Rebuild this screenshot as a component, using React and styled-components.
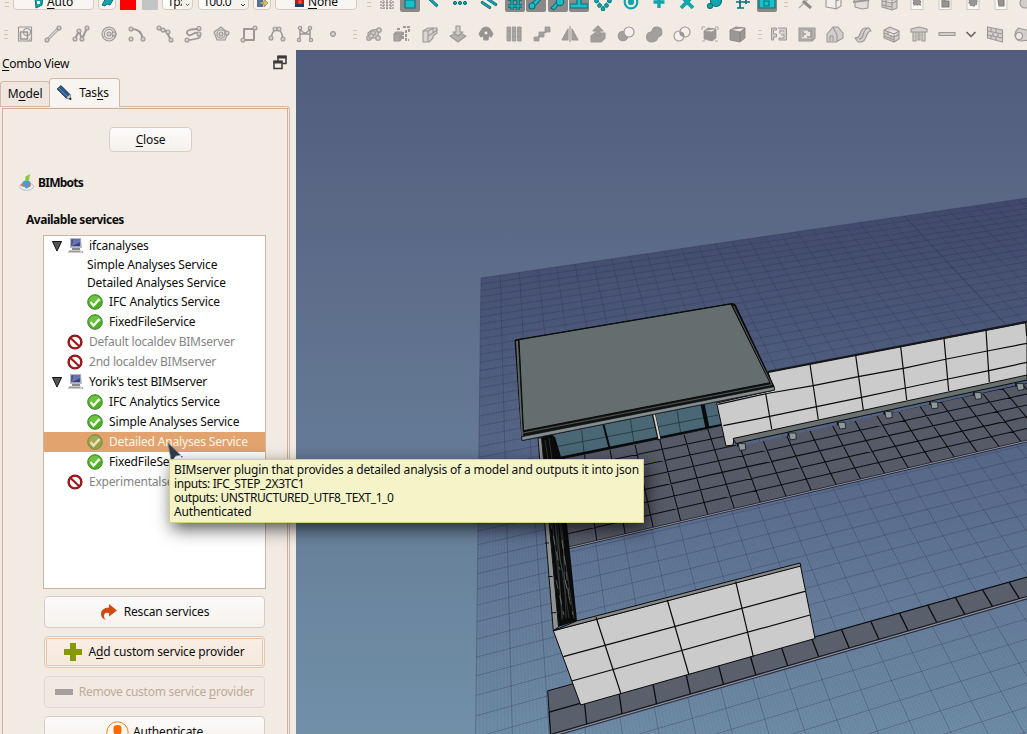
import React from "react";
import styled, { createGlobalStyle, css } from "styled-components";

const Global = createGlobalStyle`
  * { box-sizing: border-box; }
  html, body { margin: 0; padding: 0; overflow: hidden; }
  body {
    font-family: "Noto Sans", "Open Sans", sans-serif;
    font-size: 12px;
    letter-spacing: -0.15px;
    color: #0c0c0c;
    background: #f2ebe4;
  }
  u { text-decoration-thickness: 1px; text-underline-offset: 2px; text-decoration-skip-ink: none; }
`;

const Window = styled.div`
  position: relative;
  width: 1027px;
  height: 734px;
  overflow: hidden;
  display: flex;
  flex-direction: column;
  background: #f2ebe4;
`;
const ToolArea = styled.header`
  height: 50px;
  flex: none;
  overflow: hidden;
  display: flex;
  flex-direction: column;
  justify-content: flex-end;
`;
const ToolRow = styled.div`
  height: 32px;
  flex: none;
  display: flex;
  align-items: center;
`;
const Slot = styled.div`
  width: ${(p) => p.$w || 28}px;
  height: 32px;
  flex: none;
  display: flex;
  align-items: center;
  justify-content: center;
`;
const Pressed = styled(Slot)`
  width: 20px;
  height: 19px;
  margin: 0 ${(p) => p.$r ?? 1}px 0 ${(p) => p.$l || 0}px;
  border-radius: 2px;
  background: #8b8888;
`;
const GripBox = styled.div`
  width: ${(p) => p.$w}px;
  flex: none;
  display: flex;
  flex-direction: column;
  align-items: center;
  gap: 3px;
  padding-left: ${(p) => p.$pad || 0}px;
  i { width: 4px; height: 1px; background: #d5c2b2; }
`;
const BarButton = styled.div`
  width: ${(p) => p.$w}px;
  height: 17px;
  margin-right: 4px;
  flex: none;
  display: flex;
  align-items: center;
  justify-content: center;
  gap: 3px;
  margin-top: -1px;
  line-height: 15px;
  border: 1px solid #d9cabd;
  border-radius: 4px;
  background: #f8f5f2;
`;
const Field = styled(BarButton)`
  justify-content: space-between;
  margin-right: ${(p) => p.$mr}px;
  padding: 0 2px 0 4px;
  background: linear-gradient(90deg, #fff 65%, #f6f2ee 65%);
  span { width: 17px; overflow: hidden; white-space: nowrap; letter-spacing: -0.5px; }
  span.wide { width: 32px; }
`;
const Swatch = styled.div`
  width: 16px;
  height: 16px;
  flex: none;
  margin-right: ${(p) => p.$mr}px;
  background: ${(p) => p.$c};
`;

const Body = styled.div`
  flex: 1;
  min-height: 0;
  display: flex;
`;
const Side = styled.aside`
  width: 296px;
  flex: none;
  display: flex;
  flex-direction: column;
`;
const SideTitle = styled.div`
  height: 28px;
  display: flex;
  align-items: center;
  justify-content: space-between;
  padding: 0 9px 2px 2px;
  span { letter-spacing: -0.3px; }
  svg { margin-top: -2px; }
`;
const Tabs = styled.div`
  height: 28px;
  display: flex;
  align-items: flex-end;
`;
const Tab = styled.div`
  width: ${(p) => p.$w}px;
  height: ${(p) => (p.$active ? 29 : 25)}px;
  display: flex;
  align-items: center;
  justify-content: center;
  gap: 7px;
  padding-bottom: 1px;
  border: 1px solid #d3b9a6;
  border-bottom: 0;
  border-radius: 4px 4px 0 0;
  background: ${(p) => (p.$active ? "#f8f4f0" : "#efe7df")};
  ${(p) => p.$active && css`margin-left: -1px; margin-bottom: -1px; padding-right: 4px; z-index: 1;`}
`;
const PaneOuter = styled.div`
  flex: 1;
  min-height: 0;
  width: 290px;
  padding: 1px 1px 0 2px;
  border: 1px solid #d3b9a6;
  border-width: 1px 1px 0 0;
  border-radius: 0 4px 0 0;
`;
const Pane = styled.div`
  height: 640px;
  border: 1px solid #cfae98;
  border-bottom: 0;
  padding: 18px 21px 0 40px;
  display: flex;
  flex-direction: column;
`;
const Button = styled.div`
  height: 32px;
  flex: none;
  margin: 0 1px 8px;
  display: flex;
  align-items: center;
  justify-content: center;
  gap: ${(p) => p.$gap || 7}px;
  border: 1px solid #d9cdc2;
  border-radius: 4px;
  background: linear-gradient(#fcfbfa, #f5f1ed);
  white-space: nowrap;
  span { margin-top: -1px; }
  ${(p) => p.$hot && css`
    background: linear-gradient(#f9ede5, #f5e8dc);
    box-shadow: inset 0 0 0 1px #f8f0e8, inset 0 0 0 2px #f0c4a0;
  `}
  ${(p) => p.$off && css`
    background: #f1e9e2;
    border-color: #e3d8cd;
    color: #bdab98;
    letter-spacing: -0.25px;
  `}
`;
const CloseButton = styled(Button)`
  width: 83px;
  height: 25px;
  margin: 0 0 0 66px;
  span { margin-top: 0; }
`;
const Heading = styled.div`
  display: flex;
  align-items: center;
  gap: 4px;
  height: 20px;
  margin: ${(p) => p.$m};
  font-weight: 700;
  letter-spacing: ${(p) => p.$ls || -0.75}px;
`;
const Tree = styled.div`
  height: 354px;
  flex: none;
  margin: 7px 0 7px;
  border: 1px solid #ccb5a3;
  background: #fff;
`;
const Row = styled.div`
  height: ${(p) => p.$h || 20}px;
  display: flex;
  align-items: center;
  padding-left: ${(p) => p.$pad}px;
  white-space: nowrap;
  color: ${(p) => (p.$sel ? "#fff5ea" : p.$off ? "#858585" : "#0c0c0c")};
  background: ${(p) => (p.$sel ? "#e2a36e" : "transparent")};
  ${(p) => p.$off && css`letter-spacing: -0.22px;`}
  svg { flex: none; margin-right: 6px; }
  svg + svg { margin-right: 5px; }
  span { margin-top: -1px; }
`;
const View = styled.main`
  flex: 1;
  min-width: 0;
  svg { display: block; }
`;
const Tooltip = styled.div`
  position: absolute;
  left: 169px;
  top: 459px;
  width: 475px;
  height: 64px;
  padding: 3px 4px;
  line-height: 14px;
  white-space: nowrap;
  border: 1px solid #d3d37c;
  background: #f5f4c9;
  box-shadow: 3px 6px 16px rgba(0, 0, 0, 0.65);
`;
const TipLine = styled.div`
  letter-spacing: ${(p) => p.$ls || -0.15}px;
`;
const Cursor = styled.svg`
  position: absolute;
  left: 166px;
  top: 441px;
`;

/* ---------- toolbar glyphs ---------- */
const G = ({ children, s = 18, c = "#9b9896", f = "#d3cecb", w = 1.1 }) => (
  <svg width={s} height={s} viewBox="0 0 18 18" fill={f} stroke={c} strokeWidth={w} strokeLinejoin="round">
    {children}
  </svg>
);
const dots = (pts, r = 2) => pts.map(([x, y], i) => <circle key={i} cx={x} cy={y} r={r} />);
const Grip = (p) => (
  <GripBox {...p}><i /><i /><i /></GripBox>
);

const draftIcons = [
  <G><path d="M2.500 2h13v11l-3 3h-10z" fill="#efeae6" /><path d="M4.500 7h7v7h-7z" fill="none" strokeWidth="1.600" /><circle cx="11" cy="7" r="3.500" fill="none" /><path d="M15.500 12v4h-3" /></G>,
  <G><path d="M3 15L15 3" strokeWidth="3" /><path d="M3 15L15 3" stroke="#ddd" />{dots([[3, 15], [15, 3]])}</G>,
  <G><path d="M3 14L7 6l3 8 5-11" fill="none" strokeWidth="2" />{dots([[3, 14], [7, 6], [10, 14], [15, 3]])}</G>,
  <G><circle cx="9" cy="9" r="7" fill="#ddd8d4" /><circle cx="9" cy="9" r="4.500" fill="#efeae6" />{dots([[9, 9], [14, 9]])}</G>,
  <G><path d="M4 4q9 0 11 10" fill="none" strokeWidth="2" />{dots([[3, 4], [3, 14], [15, 14]])}</G>,
  <G><path d="M3 3l7 3 5 9" fill="none" strokeWidth="2" />{dots([[3, 3], [7, 5], [12, 7], [15, 15]])}</G>,
  <G><path d="M15 4Q2 4 3 8t6 1 7 1-12 5" fill="none" strokeWidth="1.800" />{dots([[15, 3.500], [3, 15], [15, 9]])}</G>,
  <G><path d="M9 2l7 6-3 7H5L2 7z" fill="#ddd8d4" /><circle cx="9" cy="9" r="4" fill="#efeae6" />{dots([[9, 9], [15, 8]])}</G>,
  <G><path d="M4 4h10v11H4z" fill="none" strokeWidth="2" />{dots([[15, 3], [3, 15]])}</G>,
  <G><path d="M3 13q2-9 6-9t6 9" fill="none" strokeWidth="1.600" />{dots([[3, 13], [7, 4], [11, 4], [15, 14]])}</G>,
  <G><path d="M4 15V3q5 10 10 0v12M4 9h10" fill="none" strokeWidth="1.500" />{dots([[3, 15], [15, 15], [4, 3], [14, 3]], 1.7)}</G>,
  <G>{dots([[9, 9]], 2.4)}</G>,
];
const modIcons = [
  <G><path d="M3 8l4-3 8-1-3 9H3z" />{dots([[4, 13], [8, 8], [14, 5], [13, 13], [6, 11]], 2.3)}</G>,
  <G f="#aaa6a3"><path d="M1 9l2-2h6v6l-2 3H1zM1 9h6v7" /><path d="M4 4h4M10 2h6v4h-3v9h3M10 7v8" strokeWidth="2" strokeDasharray="3 1" fill="none" /></G>,
  <G><path d="M2 6l5-3h9v5l-4 3v2l-4 4H2z" fill="#d9d4d0" /><path d="M2 6h5v11M7 6l5-3M12 3v5l4-3M7 11l5-3" fill="none" /></G>,
  <G><path d="M1 11l8-4 8 4-8 6z" fill="#b5b1ae" /><path d="M7 1h4v6h3l-5 4-5-4h3z" /></G>,
  <G f="#96928f"><path d="M5 4q4-4 8 0l3 5-2 3-2-2-1 5H7l-1-5-2 2-2-3z" /><circle cx="9" cy="8" r="2" fill="#eee" /></G>,
  <G f="#a8a4a1" w={.9}><path d="M2 2h3.500v14H2zM7.300 2h3.500v14H7.300zM12.600 2h3.500v14h-3.500z" /><path d="M2 6.500h3.500M7.300 6.500h3.500M12.600 6.500h3.500M2 11.500h3.500M7.300 11.500h3.500M12.600 11.500h3.500" /></G>,
  <G f="#a39f9c" w={.8}><path d="M1 12h5v4H1zM6 7h5v5H6zM12 2h5v5h-5z" /><path d="M5 12l2-1M11 8l3-2" strokeWidth="2" /></G>,
  <G f="#a39f9c"><path d="M7 4v11H1zM11 4v11h6z" /><path d="M9 1v16" /></G>,
  <G f="#a39f9c"><path d="M2 11l4-3h10v5l-4 4H2z" /><path d="M9 1l5 5h-3v5H7V6H4z" /></G>,
  <G><circle cx="6" cy="11" r="4.800" fill="#a39f9c" /><circle cx="12" cy="7" r="5" fill="#f5f0eb" /></G>,
  <G f="#a39f9c"><path d="M7 6a5 5 0 1 1 6 6q-1 5-6 5a5 5 0 1 1-1-10z" /></G>,
  <G><circle cx="6" cy="11" r="5" fill="#f5f0eb" /><circle cx="12" cy="7" r="5" fill="#f5f0eb" /><path d="M7 7q4 0 4 4-4 0-4-4" fill="#999" /></G>,
  <G f="#9b9794" w={.8}><path d="M3 6l4-3 8 1v9l-4 3-8-2zM3 6l8 1 4-3M11 7v9" /><path d="M1 2h3M1 2v3M17 2h-3M17 2v3M1 16h3M17 16h-3" /></G>,
  <G f="#9b9794" w={.8} c="#868280"><path d="M1 5l6-3 9 1v10l-5 4-10-2zM1 5l10 2 5-4M11 7v10" /></G>,
];
const archIcons = [
  <G><path d="M1.500 3h5v2h-3v4h3v3h-3v3h-2zM8 3h8.500v12H9v-2h5v-3h-3M14 6h-4v3" strokeWidth="1" /></G>,
  <G><path d="M1 3h16v10l-3 3H1z" fill="#bbb7b4" /><path d="M3 5h11v9H3z" fill="#e9e4e0" /><path d="M5 6v6M5 9h3M10 6h3v6h-4" fill="none" strokeWidth="1.500" /></G>,
  <G><path d="M1 9l6-7 5 0 5 6v5l-7 4H1zM7 2l4 8v7M4 16v-5h3v5" /></G>,
  <G><path d="M1 13q4 0 5-4 2-6 5-6h4l2 3q-3 0-5 6-2 5-5 5H4zM15 3q-4 0-6 7-1 4-4 4" /></G>,
  <G><path d="M2 5l6-3 9 4v8l-5 3-10-4zM2 8l10 4 5-3M2 5l10 4 5-3M12 9v8M2 11l10 4M6 6v3M9 11v3" /></G>,
  <G><path d="M1 4l8-2 8 2v3H1zM3 7h3v9H3zM8 7h2v8H8zM12 7h3v9h-3z" /></G>,
  <G><path d="M1 7.500h16v3H1z" /></G>,
];
const teal = "#12a3ad";
const tealIcons = {
  tick: <G c="#06717a" f={teal} w={.9}><path d="M5 4l9 8-1.500 2L4 6z" /></G>,
  dots3: <G c="#06717a" f={teal} w={1}>{dots([[4, 10], [9, 10], [14, 10]], 1.6)}</G>,
  par: <G c="#06717a" f={teal} w={.9}><path d="M2 8l9 6-1 2-9-6zM8 5l9 6-1 2-9-6z" /></G>,
  grid: <G c="#0b6a72" w={3.4}><path d="M6 2v15M12 2v15M2 6h14M2 13h14" /><path d="M6 2v15M12 2v15M2 6h14M2 13h14" stroke="#18b3bd" strokeWidth="1.500" /></G>,
  end: <G c="#06717a" f="#18c0c9"><path d="M4 11l10-9 2 2-9 10z" />{dots([[5, 13]], 3)}</G>,
  mid: <G c="#06717a" f="#18c0c9"><path d="M2 15l12-13 2 2L5 17z" />{dots([[11, 9]], 3.6)}</G>,
  perp: <G c="#06717a" f="#18c0c9"><path d="M7 2h4v9h7v4H0v-4h7z" /></G>,
  ang: <G c="#06717a" f={teal} w={.9}><path d="M4 8l5 6 5-6" fill="none" stroke={teal} />{dots([[2.500, 8], [5.500, 12.500], [9, 16], [12.500, 12.500], [15.500, 8]], 1.9)}</G>,
  center: <G c={teal} w={2.200}><circle cx="9" cy="9" r="6.300" fill="none" /><circle cx="9" cy="9" r="2" fill={teal} /></G>,
  ortho: <G c={teal} w={3.400}><path d="M9 3v12M3.500 9h11" /></G>,
  inter: <G c={teal} w={3.800}><path d="M3 3l12 12M15 3L3 15" /></G>,
  near: <G c="#06717a" f={teal}>{dots([[10, 8]], 5.500)}{dots([[4, 13]], 2.500)}</G>,
  dim: <G c="#06717a" f={teal} w={1.700}><path d="M2 9h14M3 15h7M6 5v10M12 4v7" /></G>,
};
const whiteIcons = [
  <G c="#b5b1ad"><path d="M3 15L15 3" strokeWidth="1.500" /><path d="M7 8l8 7" stroke="#8d8a88" strokeWidth="3" /></G>,
  <G><path d="M2 6l6-4 4 3v11l-4-1-6-1zM12 8l5-2v7l-5 3" fill="#f2eeea" /></G>,
  <G><path d="M2 7l8-3 7 2-1 4v5l-6 1-7-2V9z" fill="#e2ddd9" /><path d="M1 9l16-2" strokeWidth="2" /></G>,
  <G><path d="M2 4l6-2 9 2v11l-5 2-10-3zM2 8l10 2 5-2M6 3v12M12 5v11M2 12l10 2" /></G>,
  ...[0, 1, 2, 3].map((n) => (
    <G key={n} f="#fbf9f7" c="#d0cac5"><path d="M3 1h12v15.500H3z" /><path d={["M5.500 6h7v6h-7z", "M6 4h3v4h4v6H6z", "M9 5a4 4 0 1 0 .1 0z", "M6 6l6-1v8H7z"][n]} fill="#99958f" stroke="#807c78" strokeDasharray={n % 2 ? "" : "2 1"} /></G>
  )),
];

/* ---------- panel icons ---------- */
const Ok = ({ dim }) => (
  <svg width="16" height="16" viewBox="0 0 16 16">
    <circle cx="8" cy="8" r="7.300" fill={dim ? "#92a13c" : "#4cb31c"} stroke={dim ? "#7b8a48" : "#4a7d3a"} strokeWidth="1" />
    <path d="M1.800 8a6.200 6.200 0 0 1 12.400 0" fill={dim ? "#a3aa55" : "#6cc33f"} />
    <path d="M3.500 8l3 3.500 6-6.500" fill="none" stroke={dim ? "#f0dfc4" : "#f4f8ef"} strokeWidth="2.500" />
  </svg>
);
const No = () => (
  <svg width="16" height="16" viewBox="0 0 16 16" fill="none">
    <circle cx="8" cy="8" r="6.400" stroke="#7c1013" strokeWidth="2.400" />
    <path d="M3.500 4l9 8.500" stroke="#a3171b" strokeWidth="2.200" />
    <circle cx="8" cy="8" r="6.300" stroke="#b81f23" strokeWidth="1" />
  </svg>
);
const Computer = () => (
  <svg width="16" height="16" viewBox="0 0 16 16">
    <path d="M2 0h11l1 10H2z" fill="#b9bbc4" />
    <path d="M3.200 1.200h9v7h-9z" fill="#3c4380" />
    <path d="M5 1.200h7v3L4 8z" fill="#6a74ad" />
    <path d="M4 10h8v2H4z" fill="#85868c" />
    <path d="M1 12h12l1 3H0z" fill="#c9c9c9" />
    <path d="M1 13.500h11M14 13l1 2" stroke="#999" />
  </svg>
);
const Arrow = () => (
  <svg width="10" height="11" viewBox="0 0 10 11"><path d="M.500 .500h9L5 10z" fill="#555" stroke="#111" /></svg>
);

const rows = [
  { t: "ifcanalyses", k: "root" },
  { t: "Simple Analyses Service", k: "plain", h: 18 },
  { t: "Detailed Analyses Service", k: "plain", h: 18 },
  { t: "IFC Analytics Service", k: "ok" },
  { t: "FixedFileService", k: "ok" },
  { t: "Default localdev BIMserver", k: "no" },
  { t: "2nd localdev BIMserver", k: "no" },
  { t: "Yorik's test BIMserver", k: "root" },
  { t: "IFC Analytics Service", k: "ok" },
  { t: "Simple Analyses Service", k: "ok" },
  { t: "Detailed Analyses Service", k: "ok", sel: true },
  { t: "FixedFileService", k: "ok" },
  { t: "Experimentalserver", k: "no" },
];
const padOf = { root: 8, plain: 43, ok: 43, no: 23 };

/* ---------- 3D view ---------- */
const project = (i, j) => {
  const u = 0.00583 * i;
  const s = -0.01187 * j;
  const w = 1 + u + s;
  return [(481 + 3808 * u + 487 * s) / w, (278 - 209 * u - 230 * s) / w];
};
const seg = (a, b) => `M${a[0].toFixed(1)} ${a[1].toFixed(1)}L${b[0].toFixed(1)} ${b[1].toFixed(1)}`;
const lines = (i0, i1, di, j0, j1, dj) => {
  let d = "";
  for (let i = i0; i <= i1 + 0.001; i += di) d += seg(project(i, j0), project(i, j1));
  for (let j = j0; j <= j1 + 0.001; j += dj) d += seg(project(i0, j), project(i1, j));
  return d;
};
const quad = (i0, i1, j0, j1) =>
  [project(i0, j0), project(i1, j0), project(i1, j1), project(i0, j1)].map((p) => p.join(",")).join(" ");

const T = 1.0135;
const blocks = [[741.700, 446.600], [792.300, 436], [841.600, 425.300], [888.300, 414.600], [934, 405], [977.600, 395.600], [1020, 386.600]];

const Scene = () => (
  <svg width="731" height="684" viewBox="296 50 731 684">
    <defs>
      <linearGradient id="sky" x1="0" y1="0" x2="0" y2="1">
        <stop offset="0" stopColor="#515c7e" />
        <stop offset=".2" stopColor="#596684" />
        <stop offset="1" stopColor="#7190a8" />
      </linearGradient>
      <linearGradient id="plane" gradientUnits="userSpaceOnUse" x1="0" y1="200" x2="0" y2="734">
        <stop offset="0" stopColor="#2b2e4c" stopOpacity=".4" />
        <stop offset=".35" stopColor="#2f385c" stopOpacity=".27" />
        <stop offset="1" stopColor="#454b86" stopOpacity=".02" />
      </linearGradient>
      <clipPath id="paving">
        <path d="M545 457L720 427 737 447 1027 383V441L740 508 565 549z" />
      </clipPath>
    </defs>
    <rect x="296" y="50" width="731" height="684" fill="url(#sky)" />
    <polygon points={quad(0, 40, 0, 50)} fill="url(#plane)" />
    <path d={lines(0, 40, 0.1, 0, 50, 0.1)} stroke="#33386a" strokeOpacity=".15" strokeWidth=".5" fill="none" />
    <path d={lines(0, 40, 1, 0, 50, 1)} stroke="#2d2d52" strokeOpacity=".36" strokeWidth=".8" fill="none" />
    <path d={seg(project(25, 0), project(25, 50))} stroke="#2a2a4a" strokeOpacity=".3" />

    <g clipPath="url(#paving)">
      <rect x="540" y="380" width="490" height="175" fill="#5b5e6a" />
      <path d={lines(1, 1 + T * 32, T / 8, 30.700 - T * 16, 30.700, T / 8)} stroke="#454a5c" strokeOpacity=".3" strokeWidth=".5" fill="none" />
      <path d={lines(4.050 - T * 3, 4.050 + T * 30, T, 30.700 - T * 16, 30.700, T)} stroke="#0b0c10" strokeWidth="1.050" fill="none" />
    </g>
    <path d="M568 548L740 508 1027 441" stroke="#25262e" strokeWidth="2.600" fill="none" />
    <path d="M568 548L740 508 1027 441" stroke="#8c8fa2" strokeWidth="1" fill="none" />

    <polygon points={quad(2.040, 3.700, 38.750, 39.850)} fill="#5a606b" stroke="#0b0c10" />
    <polygon points={quad(2.040, 38, 39.800, 40.860)} fill="#5a606b" />
    <path d={lines(2.040, 2.040 + T * 32, T, 39.800, 40.860, 1.060)} stroke="#0b0c10" strokeWidth="1.300" fill="none" />
    <path d={seg(project(2.040, 40.920), project(38, 40.920))} stroke="#24262e" strokeWidth="3" />
    <path d={seg(project(2.040, 40.920), project(38, 40.920))} stroke="#9092a4" strokeWidth="1.200" />

    <polygon points="553,435.500 717,401.500 721,425 559,458" fill="#4a6775" />
    <path d="M555 447L718 415M581.700 430L584 453M630.500 420L634 443M677 410L680.700 433" stroke="#22343c" strokeWidth=".8" fill="none" />
    <path d="M559 458L721 425M603.500 425L609.300 447M554 437l6 20" stroke="#080a0c" strokeWidth="2" />
    <path d="M702.500 404L707.500 428" stroke="#080a0c" strokeWidth="4" />
    <path d="M653.500 414L659.500 440" stroke="#111" strokeWidth="3.600" />
    <path d="M654 414L659.500 439" stroke="#d6d2cc" strokeWidth="1.800" />

    <polygon points="768,372 1027,322.300 1027,377 734,439 733,445 726,446 716.700,403 774,390" fill="#cbcbcb" stroke="#0a0a0a" />
    <path d="M768 372L1027 321.800" stroke="#15171b" strokeWidth="2.200" />
    <path d="M718 404.300L767 393.500M767 393.500L813.300 385.700 858.300 376.700 903.300 368.300 946.700 359 987.300 351 1027 343.300M723.300 425.700L768.300 416.700 816.700 406.700 861.500 397.300 905.500 388 948 379 989 370.700 1027 362.300M810 364.500l8.300 55M855.700 355.700l7.600 54.300M900.700 346.700l6 53.300M944 338.300l4.700 52.700M986 330l3.300 52.300M1025.700 323l1 13M765.700 393.500l6 35.500" stroke="#0a0a0a" strokeWidth="1.200" fill="none" />
    <polygon points="733,438.500 1027,375 1027,380 736,443.500" fill="#68716f" stroke="#0c0c0c" />
    {blocks.map(([x, y]) => (
      <g key={x}>
        <path d={`M${x - 3} ${y - 3.500}h-1.800v3.500h1.800z`} fill="#101214" />
        <path d={`M${x - 3.500} ${y - 3}h7l.500 6-6 .8z`} fill="#8e9a9b" stroke="#15181a" strokeWidth=".8" />
      </g>
    ))}

    <polygon points="541.500,436 553,434 560,457 568,533 577,621 558,627" fill="#0a0b0b" />
    <path d="M545 440l9 60 8 120M549 438l14 100 3 80M552 470l10 70 12 78M547 460l6 50 16 108M556 500l4 60 10 40M551 510l12 108" stroke="#565d5f" strokeWidth=".5" fill="none" />
    <path d="M550 520l10 50M562 540l7 55M556 580l8 35M565 580l8 35" stroke="#9a9a9a" strokeWidth=".5" strokeDasharray="9 7" fill="none" />
    <polygon points="538,438 541.500,438 558.500,627 553.300,630.700" fill="#8f9294" stroke="#121212" />
    <path d="M545 543h4M548 576.500h4.500M551 613l5-.500" stroke="#121212" />

    <polygon points="553.300,630.700 800.500,565.700 815,638.500 580.700,705" fill="#cbcbcb" stroke="#0a0a0a" />
    <polygon points="553.300,630.700 576.700,621 800,563 801,566" fill="#86898c" stroke="#0a0a0a" />
    <path d="M596 617.300L621 694M667.300 600L689 675M735.700 581.700L753.300 656.700M563.300 656.700L805 591.300M571.700 681L810 615" stroke="#0a0a0a" strokeWidth="1.200" fill="none" />

    <polygon points="515,340 731.700,303.500 735,304.300 774,386.500 774.500,390 522,440.500" fill="#121414" stroke="#0a0a0a" />
    <polygon points="516,341 518,341 523,436 521.500,437" fill="#5d6665" />
    <polygon points="519,339.700 731,304 770,382.700 523.500,430.700" fill="#656e6e" stroke="#090909" />
    <path d="M523 433L772 384.500M733.500 306L771.500 384" stroke="#59615f" strokeWidth=".9" />
    <polygon points="521.700,436.700 774,386.700 774.700,390 522,440.500" fill="#848e91" stroke="#111" strokeWidth=".7" />
  </svg>
);

export default function App() {
  return (
    <Window>
      <Global />
      <ToolArea>
        <ToolRow>
          <Grip $w={13} />
          <BarButton $w={81}>
            <svg width="10" height="14" viewBox="0 0 10 14"><path d="M1 3l8-2-1 9-6 3z" fill={teal} stroke="#06717a" /><path d="M3 6h3v3H3z" fill="#fff" /></svg>
            <span><u>A</u>uto</span>
          </BarButton>
          <BarButton $w={18}>
            <svg width="14" height="14" viewBox="0 0 14 14"><path d="M2 10l4-7 7 2-3 5-3-1-2 2z" fill={teal} stroke="#06717a" /></svg>
          </BarButton>
          <Swatch $c="#fe0000" $mr={6} />
          <Swatch $c="#c2c4c6" $mr={4} />
          <Field $w={31} $mr={5}><span>1px</span><svg width="6" height="12" viewBox="0 0 6 12"><path d="M1 8l2 2 2-2" fill="none" stroke="#444" /></svg></Field>
          <Field $w={51} $mr={4}><span className="wide">100.0</span><svg width="6" height="12" viewBox="0 0 6 12"><path d="M1 8l2 2 2-2" fill="none" stroke="#444" /></svg></Field>
          <BarButton $w={18}>
            <svg width="12" height="14" viewBox="0 0 12 14"><path d="M1 2h6v10H1z" fill="#56709a" /><path d="M4 7h4V4l4 4-4 4v-3H4z" fill="#d8c84c" stroke="#666" strokeWidth=".6" /></svg>
          </BarButton>
          <BarButton $w={82}>
            <svg width="11" height="14" viewBox="0 0 11 14"><path d="M1 2h9v10H1z" fill="#c01818" /><path d="M1 9h9v3H1z" fill="#26347a" /><circle cx="6" cy="7" r="2" fill="#f05030" /></svg>
            <span><u>N</u>one</span>
          </BarButton>
          <Grip $w={13} $pad={2} />
          <Slot $w={26}><G c="#7d7977" f="none" w={1}><path d="M2 6h14M2 9h14M2 12h14M2 15h14M5 3v13M9 3v13M13 3v13" strokeDasharray="2 1" /></G></Slot>
          <Pressed $r={0}><G c="#06717a" f="#18c0c9"><path d="M4 7h10v8H4z" /></G></Pressed>
          <Slot $w={26}>{tealIcons.tick}</Slot>
          <Slot>{tealIcons.dots3}</Slot>
          <Slot $w={30}>{tealIcons.par}</Slot>
          <Pressed $l={1}>{tealIcons.grid}</Pressed>
          <Pressed $r={2}>{tealIcons.end}</Pressed>
          <Pressed>{tealIcons.mid}</Pressed>
          <Pressed $r={0}>{tealIcons.perp}</Pressed>
          <Slot>{tealIcons.ang}</Slot>
          <Slot>{tealIcons.center}</Slot>
          <Slot>{tealIcons.ortho}</Slot>
          <Slot>{tealIcons.inter}</Slot>
          <Slot>{tealIcons.near}</Slot>
          <Slot>{tealIcons.dim}</Slot>
          <Pressed $r={1}><G c="#06717a" f="#18c0c9"><path d="M1 2h16v13H1z" /><path d="M6 8h5v5H6z" fill="none" /></G></Pressed>
          <Grip $w={13} $pad={2} />
          {whiteIcons.map((ic, n) => <Slot key={n}>{ic}</Slot>)}
          <Slot $w={20}><G><circle cx="9" cy="10" r="5" /></G></Slot>
        </ToolRow>
        <ToolRow>
          <Grip $w={11} />
          {draftIcons.map((ic, n) => <Slot key={n}>{ic}</Slot>)}
          <Grip $w={13} $pad={3} />
          {modIcons.map((ic, n) => <Slot key={n}>{ic}</Slot>)}
          <Grip $w={13} $pad={3} />
          {archIcons.map((ic, n) => <Slot key={n}>{ic}</Slot>)}
          <Slot $w={20}><G c="#6b6765" w={1.700} f="none"><path d="M4.500 7L9 11.500 13.500 7" /></G></Slot>
          <Slot><G><path d="M1.500 2l15 3v12l-15-4zM1.500 6l15 3M1.500 10l15 3M5 3v3M10 4v3M7 7v4M12 8v4M5 11v3M10 12v4" /></G></Slot>
          <Slot><G><path d="M4 3l12 3v9l-9 1q-5 0-6-5 0-5 3-7z" /><circle cx="5" cy="11" r="3.500" fill="#efeae6" /></G></Slot>
        </ToolRow>
      </ToolArea>
      <Body>
        <Side>
          <SideTitle>
            <span><u>C</u>ombo View</span>
            <svg width="14" height="15" viewBox="0 0 14 15" fill="#f2ebe4" stroke="#3a3a3a">
              <path d="M5 1.500h8v7H5z" strokeWidth="1.500" /><path d="M4.500 2h9" strokeWidth="3" />
              <path d="M1 6.500h8v7H1z" strokeWidth="1.500" /><path d="M.500 7h9" strokeWidth="3" />
            </svg>
          </SideTitle>
          <Tabs>
            <Tab $w={50}><span>M<u>o</u>del</span></Tab>
            <Tab $w={71} $active>
              <svg width="16" height="16" viewBox="0 0 16 16">
                <path d="M1 4l4-3.500 9 9 1 5-5-1.500z" fill="#2d5688" stroke="#1d3557" strokeWidth=".8" />
                <path d="M2.500 3l9.500 9" stroke="#6d93bd" /><path d="M10.500 13l3.500-3.500 1 5z" fill="#d8d2c8" /><path d="M13.500 13l1.500 1.500" stroke="#111" strokeWidth="1.500" />
              </svg>
              <span>Tas<u>k</u>s</span>
            </Tab>
          </Tabs>
          <PaneOuter>
            <Pane>
              <CloseButton><span><u>C</u>lose</span></CloseButton>
              <Heading $m="21px 0 0 -24px">
                <svg width="15" height="18" viewBox="0 0 15 18">
                  <ellipse cx="7.500" cy="13.500" rx="7" ry="3.800" fill="#e6ebef" stroke="#aebac4" strokeWidth=".8" />
                  <path d="M3.500 9l4-2.500 4 2.500v4l-4 2.500-4-3z" fill="#3c9fd6" /><path d="M2.500 10.500l3 2-1 1.500-3-1.500zM10 11l2-1-.5 3-3 2z" fill="#e07050" />
                  <path d="M6 8.500l.5-5L11 1l-1 6.500z" fill="#8fc63f" />
                </svg>
                BIMbots
              </Heading>
              <Heading $m="20px 0 0 -17px" $ls={-0.48}>Available services</Heading>
              <Tree>
                {rows.map((r, n) => (
                  <Row key={n} $h={r.h} $pad={padOf[r.k]} $sel={r.sel} $off={r.k === "no"}>
                    {r.k === "root" && <><Arrow /><Computer /></>}
                    {r.k === "ok" && <Ok dim={r.sel} />}
                    {r.k === "no" && <No />}
                    <span>{r.t}</span>
                  </Row>
                ))}
              </Tree>
              <Button>
                <svg width="17" height="17" viewBox="0 0 17 17"><path d="M9 0l8 6.500-8 6V9Q4 8 4 12q0 3 3 4Q1 15 1 10q0-6 8-6.500z" fill="#cf4913" /></svg>
                <span>Rescan services</span>
              </Button>
              <Button $hot $gap={6}>
                <svg width="18" height="18" viewBox="0 0 18 18"><path d="M6 0h6v6h6v6h-6v6H6v-6H0V6h6z" fill="#879900" /></svg>
                <span>A<u>d</u>d custom service provider</span>
              </Button>
              <Button $off $gap={6}>
                <svg width="18" height="6" viewBox="0 0 18 6"><path d="M0 0h18v6H0z" fill="#a5a09b" /></svg>
                <span>Remove custom service <u>p</u>rovider</span>
              </Button>
              <Button $gap={4}>
                <svg width="23" height="23" viewBox="0 0 23 23"><circle cx="11.500" cy="11.500" r="10.700" fill="#fff8f0" stroke="#f47b1b" /><path d="M7.500 7q0-3 4-3t4 3v3q0 3-2.500 4v3h-3v-3Q7.500 13 7.500 10z" fill="#fb6a00" /></svg>
                <span>Authenticate</span>
              </Button>
            </Pane>
          </PaneOuter>
        </Side>
        <View><Scene /></View>
      </Body>
      <Cursor width="18" height="22" viewBox="0 0 18 22">
        <path d="M2 2l12.500 12-5 1-4 6z" fill="#2f3d4c" stroke="#6d7d8c" strokeWidth=".7" />
      </Cursor>
      <Tooltip>
        <TipLine>BIMserver plugin that provides a detailed analysis of a model and outputs it into json</TipLine>
        <TipLine $ls={-0.38}>inputs: IFC_STEP_2X3TC1</TipLine>
        <TipLine $ls={-0.42}>outputs: UNSTRUCTURED_UTF8_TEXT_1_0</TipLine>
        <TipLine>Authenticated</TipLine>
      </Tooltip>
    </Window>
  );
}
